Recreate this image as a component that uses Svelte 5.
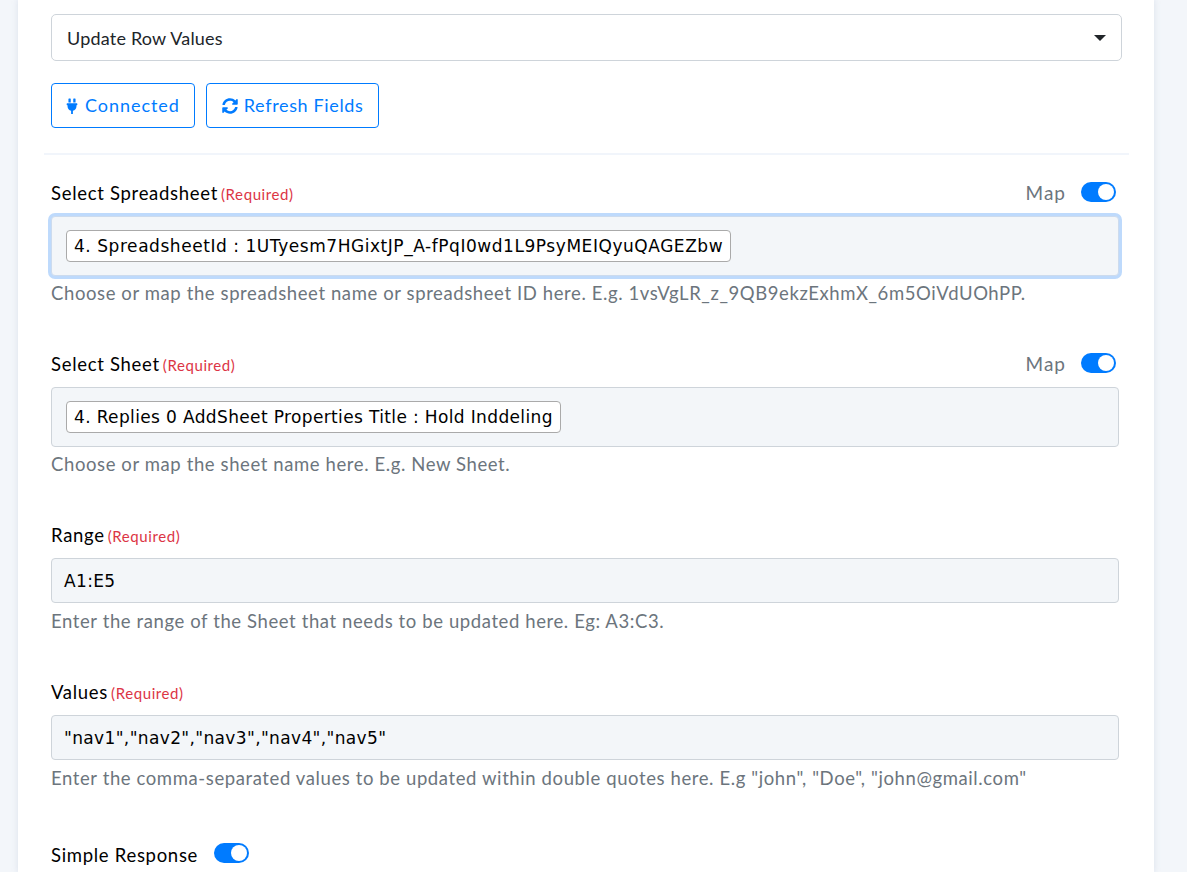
<script>
  const fields = [
    { label: 'Select Spreadsheet', map: true, focus: true, tag: '4. SpreadsheetId : 1UTyesm7HGixtJP_A-fPqI0wd1L9PsyMEIQyuQAGEZbw', help: 'Choose or map the spreadsheet name or spreadsheet ID here. E.g. 1vsVgLR_z_9QB9ekzExhmX_6m5OiVdUOhPP.' },
    { label: 'Select Sheet', map: true, tag: '4. Replies 0 AddSheet Properties Title : Hold Inddeling', help: 'Choose or map the sheet name here. E.g. New Sheet.' },
    { label: 'Range', value: 'A1:E5', help: 'Enter the range of the Sheet that needs to be updated here. Eg: A3:C3.' },
    { label: 'Values', value: '"nav1","nav2","nav3","nav4","nav5"', help: 'Enter the comma-separated values to be updated within double quotes here. E.g "john", "Doe", "john@gmail.com"' }
  ];
</script>

<main class="page">
  <section class="card">
    <div class="select">
      <span>Update Row Values</span>
      <i class="caret"></i>
    </div>
    <div class="actions">
      <button class="btn">
        <svg class="ico plug" viewBox="0 0 12 18" aria-hidden="true"><path fill="currentColor" d="M2.5 0.5h1.6a.5.5 0 0 1 .5.5v4H2V1a.5.5 0 0 1 .5-.5zM7.9 0.5h1.6a.5.5 0 0 1 .5.5v4H7.4V1a.5.5 0 0 1 .5-.5zM0.5 6h11a.5.5 0 0 1 .5.5v1.2a.5.5 0 0 1-.5.5H11v1.3c0 2.4-1.7 4.4-4 4.9V18H5v-3.6c-2.3-.5-4-2.500-4-4.900V8.200H.5a.5.5 0 0 1-.5-.5V6.500a.5.5 0 0 1 .5-.5z"/></svg>
        <span>Connected</span>
      </button>
      <button class="btn refresh">
        <svg class="ico" viewBox="0 0 512 512" aria-hidden="true"><path fill="currentColor" d="M370.720 133.280C339.458 104.008 298.888 87.962 255.848 88c-77.458.068-144.328 53.178-162.791 126.850-1.344 5.363-6.122 9.150-11.651 9.150H24.103c-7.498 0-13.194-6.807-11.807-14.176C33.933 94.924 134.813 8 256 8c66.448 0 126.791 26.136 171.315 68.685L463.030 40.970C478.149 25.851 504 36.559 504 57.941V192c0 13.255-10.745 24-24 24H345.941c-21.382 0-32.090-25.851-16.971-40.971l41.750-41.749zM32 296h134.059c21.382 0 32.090 25.851 16.971 40.971l-41.750 41.750c31.262 29.273 71.835 45.319 114.876 45.280 77.418-.070 144.315-53.144 162.787-126.849 1.344-5.363 6.122-9.150 11.651-9.150h57.304c7.498 0 13.194 6.807 11.807 14.176C478.067 417.076 377.187 504 256 504c-66.448 0-126.791-26.136-171.315-68.685L48.970 471.030C33.851 486.149 8 475.441 8 454.059V320c0-13.255 10.745-24 24-24z"/></svg>
        <span>Refresh Fields</span>
      </button>
    </div>
    <hr class="rule" />

    {#each fields as f}
      <div class="field">
        <div class="head">
          <span class="label">{f.label}<small>(Required)</small></span>
          {#if f.map}
            <span class="map">Map <span class="toggle"></span></span>
          {/if}
        </div>
        {#if f.tag}
          <div class="input tall" class:focus={f.focus}><span class="tag">{f.tag}</span></div>
          <p class="help">{f.help}</p>
        {:else}
          <div class="input">{f.value}</div>
          <p class="help short">{f.help}</p>
        {/if}
      </div>
    {/each}

    <div class="simple">
      <span class="label">Simple Response</span>
      <span class="toggle"></span>
    </div>
  </section>
</main>

<style>
  :global(body) {
    margin: 0;
    background: #f3f6fa;
    overflow: hidden;
  }
  .page {
    height: 872px;
    overflow: hidden;
    padding-left: 18px;
    font-family: Lato, "Noto Sans", sans-serif;
    color: #000;
  }
  .card {
    width: 1136px;
    box-sizing: border-box;
    height: 872px;
    background: #fff;
    box-shadow: 0 0 6px rgba(160, 175, 200, 0.3);
    padding: 14px 32px 0 33px;
  }
  .select {
    height: 47px;
    box-sizing: border-box;
    border: 1px solid #ced4da;
    border-radius: 5px;
    display: flex;
    align-items: center;
    justify-content: space-between;
    padding: 0 15px;
    font-size: 18px;
    letter-spacing: 0.2px;
    color: #212529;
  }
  .caret {
    width: 0;
    height: 0;
    border-left: 6px solid transparent;
    border-right: 6px solid transparent;
    border-top: 6px solid #212529;
  }
  .actions {
    display: flex;
    gap: 11px;
    margin-top: 22px;
  }
  .btn {
    height: 45px;
    box-sizing: border-box;
    background: #fff;
    border: 1px solid #007bff;
    border-radius: 4px;
    color: #007bff;
    font: 400 18px Lato, sans-serif;
    letter-spacing: 0.95px;
    padding: 0 14px;
    display: flex;
    align-items: center;
    gap: 7px;
  }
  .btn span { position: relative; top: -1px; }
  .btn.refresh { letter-spacing: 0.65px; padding: 0 14px 0 15px; gap: 6px; }
  .ico { width: 16px; height: 16px; }
  .plug { width: 12px; height: 16px; }
  .rule {
    border: 0;
    height: 2px;
    background: #f1f5fb;
    margin: 25px -7px 0;
  }
  .field { margin-top: 26px; width: 1068px; }
  .field + .field { margin-top: 47px; }
  .head {
    display: flex;
    justify-content: space-between;
    align-items: center;
    height: 24px;
    margin-bottom: 11px;
  }
  .label { font-size: 18.500px; letter-spacing: 0.7px; color: #000; }
  small { font-size: 15px; letter-spacing: 0.6px; color: #dc3545; margin-left: 3px; }
  .map {
    display: flex;
    align-items: center;
    gap: 15px;
    font-size: 19px;
    letter-spacing: 1px;
    color: #6c757d;
    margin-right: 3px;
    position: relative;
    top: -1px;
  }
  .toggle {
    display: inline-block;
    width: 35px;
    height: 20px;
    border-radius: 10px;
    background: #007bff;
    position: relative;
  }
  .simple .toggle { top: -2px; }
  .toggle::after {
    content: "";
    position: absolute;
    right: 2px;
    top: 2px;
    width: 16px;
    height: 16px;
    background: #fff;
    border-radius: 50%;
  }
  .input {
    box-sizing: border-box;
    height: 45px;
    background: #f3f6f9;
    border: 1px solid #ced4da;
    border-radius: 4px;
    display: flex;
    align-items: center;
    padding: 0 12px;
    font: 17px "DejaVu Sans", sans-serif;
    letter-spacing: 0.36px;
    color: #000;
  }
  .input.tall { height: 60px; padding: 0 14px; }
  .input.focus { box-shadow: 0 0 0 3px #bedafc; border-color: #ccdbee; letter-spacing: 0.55px; }
  .tag {
    background: #fff;
    border: 1px solid #aaa;
    border-radius: 4px;
    padding: 3px 7px;
    line-height: 24px;
  }
  .help {
    margin: 5px 0 0;
    font-size: 18.500px;
    letter-spacing: 0.6px;
    color: #6c757d;
    line-height: 24px;
  }
  .help.short { margin-top: 6px; }
  .simple {
    display: flex;
    align-items: center;
    height: 24px;
    gap: 16px;
    margin-top: 53px;
  }
</style>
